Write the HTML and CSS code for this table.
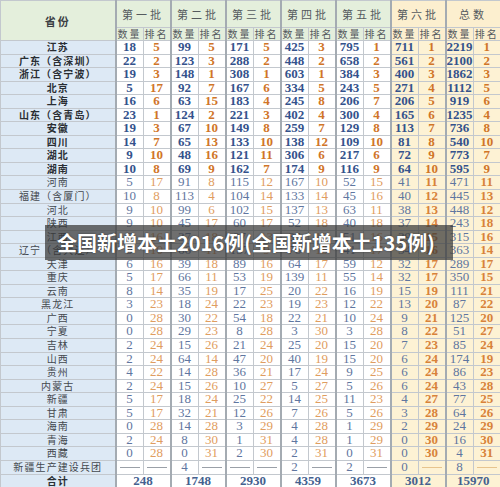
FILE: index.html
```html
<!DOCTYPE html>
<html lang="zh">
<head>
<meta charset="utf-8">
<title>各省份数量统计</title>
<link rel="stylesheet" href="styles.css">
</head>
<body>
<table class="stats">
<colgroup>
<col class="c-prov">
<col span="14" class="c-num">
</colgroup>
<thead>
<tr class="h1">
<th rowspan="2" class="prov-h">省份</th>
<th colspan="2">第一批</th>
<th colspan="2">第二批</th>
<th colspan="2">第三批</th>
<th colspan="2">第四批</th>
<th colspan="2">第五批</th>
<th colspan="2" class="yh">第六批</th>
<th colspan="2" class="yh">总数</th>
</tr>
<tr class="h2">
<th>数量</th><th>排名</th><th>数量</th><th>排名</th><th>数量</th><th>排名</th><th>数量</th><th>排名</th><th>数量</th><th>排名</th><th class="yh">数量</th><th class="yh">排名</th><th class="yh">数量</th><th class="yh">排名</th>
</tr>
</thead>
<tbody>
<tr class="b"><td>江苏</td><td>18</td><td>5</td><td>99</td><td>5</td><td>171</td><td>5</td><td>425</td><td>3</td><td>795</td><td>1</td><td>711</td><td>1</td><td>2219</td><td>1</td></tr>
<tr class="b"><td>广东（含深圳）</td><td>22</td><td>2</td><td>123</td><td>3</td><td>288</td><td>2</td><td>448</td><td>2</td><td>658</td><td>2</td><td>561</td><td>2</td><td>2100</td><td>2</td></tr>
<tr class="b"><td>浙江（含宁波）</td><td>19</td><td>3</td><td>148</td><td>1</td><td>308</td><td>1</td><td>603</td><td>1</td><td>384</td><td>3</td><td>400</td><td>3</td><td>1862</td><td>3</td></tr>
<tr class="b"><td>北京</td><td>5</td><td>17</td><td>92</td><td>7</td><td>167</td><td>6</td><td>334</td><td>5</td><td>243</td><td>5</td><td>271</td><td>4</td><td>1112</td><td>5</td></tr>
<tr class="b"><td>上海</td><td>16</td><td>6</td><td>63</td><td>15</td><td>183</td><td>4</td><td>245</td><td>8</td><td>206</td><td>7</td><td>206</td><td>5</td><td>919</td><td>6</td></tr>
<tr class="b"><td>山东（含青岛）</td><td>23</td><td>1</td><td>124</td><td>2</td><td>221</td><td>3</td><td>402</td><td>4</td><td>300</td><td>4</td><td>165</td><td>6</td><td>1235</td><td>4</td></tr>
<tr class="b"><td>安徽</td><td>19</td><td>3</td><td>67</td><td>10</td><td>149</td><td>8</td><td>259</td><td>7</td><td>129</td><td>8</td><td>113</td><td>7</td><td>736</td><td>8</td></tr>
<tr class="b"><td>四川</td><td>14</td><td>7</td><td>65</td><td>13</td><td>133</td><td>10</td><td>138</td><td>12</td><td>109</td><td>10</td><td>81</td><td>8</td><td>540</td><td>10</td></tr>
<tr class="b"><td>湖北</td><td>9</td><td>10</td><td>48</td><td>16</td><td>121</td><td>11</td><td>306</td><td>6</td><td>217</td><td>6</td><td>72</td><td>9</td><td>773</td><td>7</td></tr>
<tr class="b"><td>湖南</td><td>10</td><td>8</td><td>69</td><td>9</td><td>162</td><td>7</td><td>174</td><td>9</td><td>116</td><td>9</td><td>64</td><td>10</td><td>595</td><td>9</td></tr>
<tr><td>河南</td><td>5</td><td>17</td><td>91</td><td>8</td><td>115</td><td>12</td><td>167</td><td>10</td><td>52</td><td>15</td><td>41</td><td>11</td><td>471</td><td>11</td></tr>
<tr><td>福建（含厦门）</td><td>10</td><td>8</td><td>113</td><td>4</td><td>104</td><td>14</td><td>133</td><td>14</td><td>45</td><td>16</td><td>40</td><td>12</td><td>445</td><td>13</td></tr>
<tr><td>河北</td><td>9</td><td>10</td><td>99</td><td>6</td><td>102</td><td>15</td><td>137</td><td>13</td><td>63</td><td>11</td><td>38</td><td>13</td><td>448</td><td>12</td></tr>
<tr><td>陕西</td><td>9</td><td>10</td><td>45</td><td>17</td><td>60</td><td>17</td><td>52</td><td>18</td><td>40</td><td>18</td><td>37</td><td>14</td><td>243</td><td>18</td></tr>
<tr><td>江西</td><td>6</td><td>16</td><td>37</td><td>18</td><td>97</td><td>13</td><td>85</td><td>16</td><td>51</td><td>16</td><td>39</td><td>15</td><td>315</td><td>16</td></tr>
<tr><td>辽宁（含大连）</td><td>9</td><td>10</td><td>66</td><td>11</td><td>137</td><td>9</td><td>76</td><td>15</td><td>41</td><td>17</td><td>34</td><td>16</td><td>363</td><td>14</td></tr>
<tr><td>天津</td><td>6</td><td>16</td><td>39</td><td>18</td><td>89</td><td>16</td><td>64</td><td>17</td><td>59</td><td>12</td><td>32</td><td>17</td><td>289</td><td>17</td></tr>
<tr><td>重庆</td><td>5</td><td>17</td><td>66</td><td>11</td><td>53</td><td>19</td><td>139</td><td>11</td><td>55</td><td>14</td><td>32</td><td>17</td><td>350</td><td>15</td></tr>
<tr><td>云南</td><td>8</td><td>14</td><td>35</td><td>19</td><td>17</td><td>25</td><td>20</td><td>22</td><td>16</td><td>19</td><td>15</td><td>19</td><td>111</td><td>21</td></tr>
<tr><td>黑龙江</td><td>3</td><td>23</td><td>18</td><td>24</td><td>22</td><td>23</td><td>19</td><td>23</td><td>12</td><td>22</td><td>13</td><td>20</td><td>87</td><td>22</td></tr>
<tr><td>广西</td><td>0</td><td>28</td><td>30</td><td>22</td><td>54</td><td>18</td><td>22</td><td>21</td><td>10</td><td>24</td><td>9</td><td>21</td><td>125</td><td>20</td></tr>
<tr><td>宁夏</td><td>0</td><td>28</td><td>29</td><td>23</td><td>8</td><td>28</td><td>3</td><td>30</td><td>3</td><td>28</td><td>8</td><td>22</td><td>51</td><td>27</td></tr>
<tr><td>吉林</td><td>2</td><td>24</td><td>15</td><td>26</td><td>21</td><td>24</td><td>25</td><td>20</td><td>15</td><td>20</td><td>7</td><td>23</td><td>85</td><td>24</td></tr>
<tr><td>山西</td><td>2</td><td>24</td><td>64</td><td>14</td><td>47</td><td>20</td><td>40</td><td>19</td><td>15</td><td>20</td><td>6</td><td>24</td><td>174</td><td>19</td></tr>
<tr><td>贵州</td><td>4</td><td>22</td><td>14</td><td>28</td><td>36</td><td>21</td><td>17</td><td>24</td><td>9</td><td>25</td><td>6</td><td>24</td><td>86</td><td>23</td></tr>
<tr><td>内蒙古</td><td>2</td><td>24</td><td>15</td><td>26</td><td>10</td><td>27</td><td>5</td><td>27</td><td>5</td><td>26</td><td>6</td><td>24</td><td>43</td><td>28</td></tr>
<tr><td>新疆</td><td>5</td><td>17</td><td>18</td><td>24</td><td>25</td><td>22</td><td>14</td><td>25</td><td>11</td><td>23</td><td>4</td><td>27</td><td>77</td><td>25</td></tr>
<tr><td>甘肃</td><td>5</td><td>17</td><td>32</td><td>21</td><td>12</td><td>26</td><td>7</td><td>26</td><td>5</td><td>26</td><td>3</td><td>28</td><td>64</td><td>26</td></tr>
<tr><td>海南</td><td>0</td><td>28</td><td>14</td><td>28</td><td>3</td><td>29</td><td>4</td><td>28</td><td>1</td><td>29</td><td>2</td><td>29</td><td>24</td><td>29</td></tr>
<tr><td>青海</td><td>2</td><td>24</td><td>8</td><td>30</td><td>1</td><td>31</td><td>4</td><td>28</td><td>1</td><td>29</td><td>0</td><td>30</td><td>16</td><td>30</td></tr>
<tr><td>西藏</td><td>0</td><td>28</td><td>0</td><td>31</td><td>2</td><td>30</td><td>2</td><td>31</td><td>0</td><td>31</td><td>0</td><td>30</td><td>4</td><td>31</td></tr>
<tr><td>新疆生产建设兵团</td><td><span class="dash"></span></td><td><span class="dash"></span></td><td>4</td><td><span class="dash"></span></td><td><span class="dash"></span></td><td><span class="dash"></span></td><td>2</td><td><span class="dash"></span></td><td>2</td><td><span class="dash"></span></td><td>0</td><td><span class="dash"></span></td><td>8</td><td><span class="dash"></span></td></tr>
</tbody>
<tfoot>
<tr class="total"><td>合计</td><td colspan="2">248</td><td colspan="2">1748</td><td colspan="2">2930</td><td colspan="2">4359</td><td colspan="2">3673</td><td colspan="2" class="yt">3012</td><td colspan="2" class="yt">15970</td></tr>
</tfoot>
</table>
<div class="banner">全国新增本土2016例(全国新增本土135例)</div>
</body>
</html>
```
FILE: styles.css
```css
html, body {
  margin: 0;
  padding: 0;
  background: #ffffff;
}
body {
  width: 500px;
  height: 487px;
  overflow: hidden;
  position: relative;
}
.stats {
  border-collapse: collapse;
  table-layout: fixed;
  width: 500px;
  font-family: "Liberation Serif", "Noto Sans CJK SC", serif;
}
.c-prov { width: 115px; }
.c-num { width: 27.5px; }

.stats th, .stats td {
  padding: 0;
  text-align: center;
  white-space: nowrap;
  overflow: hidden;
  border: 1px solid #c3c8ce;
}

/* header */
.stats thead th {
  background: #e4efdc;
  font-family: "Noto Sans CJK SC", sans-serif;
  font-weight: normal;
  color: #555a5e;
}
.stats .h1 th {
  height: 26px;
  font-size: 11px;
  letter-spacing: 3px;
  border-left: 2px solid #a4abb2;
  border-right: 2px solid #a4abb2;
}
.stats .h1 th.prov-h {
  font-weight: bold;
  color: #3b3f44;
  letter-spacing: 2px;
  font-size: 11px;
  border-left: 1px solid #c3c8ce;
}
.stats .h2 th {
  height: 12px;
  font-size: 10px;
  line-height: 12px;
  letter-spacing: 2px;
}
.stats .h2 th:nth-child(odd) { border-left: 2px solid #a4abb2; }
.stats thead th.yh { background: #fcefcf; }

/* body rows */
.stats tbody td, .stats tfoot td {
  line-height: 12.54px;
  font-size: 13px;
}
.stats tbody td:nth-child(even) {
  color: #5f76a0;
  border-left: 2px solid #a4abb2;
}
.stats tbody td:nth-child(odd) {
  color: #df9d60;
}
.stats tbody td:nth-child(n+12) { background: #fdf2d4; }
.stats tbody td:nth-child(13),
.stats tbody td:nth-child(15) {
  font-weight: bold;
  color: #d8823a;
}

.stats tbody tr.b td { font-weight: bold; }
.stats tbody tr.b td:nth-child(even) { color: #34528c; }
.stats tbody tr.b td:nth-child(odd) { color: #d07528; }

/* province column (after number rules so it wins) */
.stats tbody tr td:first-child,
.stats tfoot tr td:first-child {
  background: #dde9f5;
  font-family: "Noto Sans CJK SC", sans-serif;
  font-size: 10px;
  letter-spacing: 1.1px;
  color: #44484e;
  font-weight: normal;
  border-left: 1px solid #c3c8ce;
  border-right: 2px solid #a4abb2;
}
.stats tbody tr.b td:first-child,
.stats tfoot tr td:first-child {
  color: #2a2e33;
  font-weight: bold;
}

.dash {
  display: inline-block;
  width: 20px;
  height: 1px;
  background: #9aa0a8;
  vertical-align: middle;
}
.stats tbody td:nth-child(n+12) .dash { background: #e7c48e; }

.stats tfoot td {
  font-weight: bold;
  color: #44618f;
  border-left: 2px solid #a4abb2;
}
.stats tfoot td.yt { background: #fdf2d4; }

/* overlay banner */
.banner {
  position: absolute;
  left: 45px;
  top: 225px;
  width: 396px;
  height: 35px;
  padding-left: 12px;
  background: rgba(55, 55, 55, 0.72);
  color: #ffffff;
  font-family: "Noto Sans CJK SC", sans-serif;
  font-weight: bold;
  font-size: 20px;
  line-height: 35px;
  white-space: nowrap;
  text-shadow: 0 0 2px rgba(0, 0, 0, 0.5);
}
```
